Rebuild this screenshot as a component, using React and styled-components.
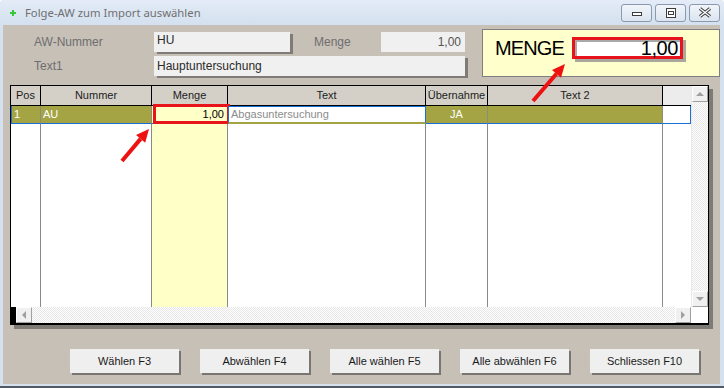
import React from 'react';
import styled, { createGlobalStyle } from 'styled-components';

const Global = createGlobalStyle`
  html, body { margin: 0; padding: 0; background: #ffffff; }
  body { width: 724px; height: 388px; overflow: hidden; font-family: "Liberation Sans", Arial, sans-serif; }
`;

const Window = styled.div`
  position: relative;
  width: 724px;
  height: 388px;
  box-sizing: border-box;
  display: flex;
  flex-direction: column;
  background: #d6e1ef;
  border-bottom: 2px solid #4f5864;
  border-radius: 4px 4px 0 0;
  overflow: hidden;
`;

const TitleBar = styled.div`
  height: 25px;
  flex: none;
  display: flex;
  align-items: center;
  padding: 0 4px 0 10px;
  background: linear-gradient(#e3ecf7, #d4e0ef);
`;

const TitleText = styled.span`
  margin-left: 9px;
  font-family: "Noto Sans", "Open Sans", sans-serif;
  font-size: 11.3px;
  color: #707070;
  flex: 1;
`;

const CapButtons = styled.div`
  display: flex;
  gap: 3px;
`;

const CapBtn = styled.div`
  width: 31px;
  height: 18px;
  box-sizing: border-box;
  border: 1px solid #8a99ae;
  border-radius: 3px;
  background: linear-gradient(#f1f5fa, #dbe4ef);
  display: flex;
  align-items: center;
  justify-content: center;
`;

const Client = styled.div`
  margin: 0 4px 0 3px;
  height: 359px;
  flex: none;
  background: #c7c0b7;
  display: flex;
  flex-direction: column;
`;

const TopSection = styled.div`
  height: 60px;
  flex: none;
  display: flex;
  justify-content: space-between;
  align-items: flex-start;
`;

const Form = styled.div`
  margin: 7px 0 0 31px;
  display: grid;
  grid-template-columns: 120px 136px 24px 67px 84px;
  grid-auto-rows: 20px;
  row-gap: 4px;
`;

const Label = styled.div`
  grid-column: ${p => p.$col};
  font-size: 12px;
  line-height: 20px;
  color: #6e6e6e;
`;

const Field = styled.div`
  grid-column: ${p => p.$col};
  box-sizing: border-box;
  height: 20px;
  padding: 0 4px 0 3px;
  background: #f0f0f0;
  font-size: 12px;
  line-height: ${p => (p.$top ? '16px' : '20px')};
  color: ${p => p.$color || '#2b2b2b'};
  text-align: ${p => p.$align || 'left'};
  box-shadow: ${p => (p.$shadow ? '3px 2px 0 #7f7c78' : 'none')};
`;

const MengeBox = styled.div`
  margin-top: 4px;
  width: 238px;
  height: 48px;
  box-sizing: border-box;
  border: 1px solid #7f7f7f;
  background: #ffffcc;
  display: flex;
  align-items: flex-start;
  padding: 7px 0 0 12px;
`;

const BigLabel = styled.div`
  width: 77px;
  font-size: 20px;
  letter-spacing: -0.9px;
  line-height: 22px;
  color: #000;
`;

const BigInput = styled.div`
  width: 111px;
  height: 22px;
  box-sizing: border-box;
  border: 3px solid #e8141c;
  background: #ffffff;
  box-shadow: inset 2px 2px 0 #a9a9a9, 3px 3px 0 #aaa79f;
  font-size: 20px;
  letter-spacing: -0.4px;
  line-height: 16px;
  text-align: right;
  padding-right: 2px;
  color: #000;
`;

const TableFrame = styled.div`
  margin-left: 7px;
  width: 699px;
  height: 240px;
  flex: none;
  box-sizing: border-box;
  border: 1px solid #000;
  border-bottom-width: 2px;
  box-shadow: 4px 4px 0 #7e7a75;
  background: #ffffff;
  display: grid;
  grid-template-columns: 680px 17px;
  grid-template-rows: 221px 16px;
`;

const GridArea = styled.div`
  display: flex;
  flex-direction: column;
  overflow: hidden;
`;

const COLS = '30px 111px 76px 198px 62px 175px 28px';

const HeaderRow = styled.div`
  display: grid;
  grid-template-columns: ${COLS};
  height: 20px;
  flex: none;
`;

const HeadCell = styled.div`
  box-sizing: border-box;
  height: 20px;
  background: ${p => (p.$blank ? '#ececec' : '#d4d0c8')};
  border-right: ${p => (p.$blank ? 'none' : '1px solid #000')};
  border-bottom: 1px solid #000;
  font-size: 11px;
  line-height: 19px;
  text-align: center;
  color: #1c1c1c;
  white-space: nowrap;
  overflow: hidden;
`;

const SelRow = styled.div`
  display: grid;
  grid-template-columns: ${COLS};
  height: 18px;
  flex: none;
`;

const OLIVE = '#a4a445';
const BLUE = '#1a6fd4';

const Cell = styled.div`
  position: relative;
  box-sizing: border-box;
  height: 18px;
  font-size: 11px;
  line-height: 17px;
  white-space: nowrap;
  background: ${p => p.$bg || OLIVE};
  color: ${p => p.$color || '#ffffff'};
  text-align: ${p => p.$align || 'left'};
  padding: ${p => p.$pad || '0 0 0 2px'};
  border-right: ${p => p.$right || '1px solid #8e8e76'};
  border-bottom: 1px solid ${BLUE};
  border-left: ${p => p.$left || 'none'};
`;

const EditCell = styled(Cell)`
  border: 1px solid ${BLUE};
  border-bottom: 2px solid ${OLIVE};
  line-height: 15px;
`;

const RedMark = styled.div`
  position: absolute;
  left: 1px;
  right: -3px;
  top: -2px;
  bottom: -1px;
  border: 3px solid #e8141c;
  pointer-events: none;
`;

const FillRow = styled.div`
  display: grid;
  grid-template-columns: ${COLS};
  flex: 1;
`;

const FillCell = styled.div`
  background: ${p => (p.$yellow ? '#ffffc8' : '#ffffff')};
  border-right: ${p => (p.$last ? 'none' : '1px solid #8a8a8a')};
`;

const checker = `repeating-conic-gradient(#ffffff 0 25%, #e6e6e6 0 50%) 0 0 / 2px 2px`;

const VScroll = styled.div`
  display: flex;
  flex-direction: column;
  justify-content: space-between;
  background: ${checker};
  border-left: 1px solid #e8e8e8;
`;

const HScroll = styled.div`
  display: flex;
  background: ${checker};
`;

const BlackStub = styled.div`
  width: 5px;
  background: #000;
`;

const ScrollBtn = styled.div`
  width: 16px;
  height: 16px;
  box-sizing: border-box;
  flex: none;
  background: #f0f0f0;
  border: 1px solid;
  border-color: #ffffff #a0a0a0 #a0a0a0 #ffffff;
  display: flex;
  align-items: center;
  justify-content: center;
  margin-left: ${p => (p.$push ? 'auto' : '0')};
`;

const Tri = styled.div`
  width: 0;
  height: 0;
  border: 4px solid transparent;
  ${p => p.$dir === 'up' && `border-bottom-color:#a0a0a0; border-top-width:0;`}
  ${p => p.$dir === 'down' && `border-top-color:#a0a0a0; border-bottom-width:0;`}
  ${p => p.$dir === 'left' && `border-right-color:#a0a0a0; border-left-width:0;`}
  ${p => p.$dir === 'right' && `border-left-color:#a0a0a0; border-right-width:0;`}
`;

const Corner = styled.div`
  background: #ffffff;
`;

const ButtonRow = styled.div`
  display: flex;
  gap: 21px;
  padding-left: 67px;
  margin-top: 24px;
`;

const Button = styled.div`
  width: 109px;
  height: 24px;
  box-sizing: border-box;
  background: #efefef;
  box-shadow: 2px 2px 0 #787572;
  font-size: 11px;
  line-height: 24px;
  text-align: center;
  color: #1a1a1a;
`;

const ArrowSvg = styled.svg`
  position: absolute;
  left: ${p => p.$x}px;
  top: ${p => p.$y}px;
  pointer-events: none;
`;

function Arrow({ x, y, w, h, tail, base, tip, c1, c2 }) {
  return (
    <ArrowSvg $x={x} $y={y} width={w} height={h} viewBox={`0 0 ${w} ${h}`}>
      <line x1={tail[0]} y1={tail[1]} x2={base[0]} y2={base[1]} stroke="#ee1111" strokeWidth="4" />
      <polygon points={`${tip[0]},${tip[1]} ${c1[0]},${c1[1]} ${c2[0]},${c2[1]}`} fill="#ee1111" />
    </ArrowSvg>
  );
}

export default function App() {
  return (
    <>
      <Global />
      <Window>
        <TitleBar>
          <svg width="6" height="6" viewBox="0 0 6 6">
            <rect x="2" y="0" width="2" height="6" fill="#37c837" />
            <rect x="0" y="2" width="6" height="2" fill="#37c837" />
          </svg>
          <TitleText>Folge-AW zum Import auswählen</TitleText>
          <CapButtons>
            <CapBtn>
              <svg width="12" height="10" viewBox="0 0 12 10">
                <rect x="1.5" y="4.5" width="9" height="3" fill="#fff" stroke="#3c3c3c" />
              </svg>
            </CapBtn>
            <CapBtn>
              <svg width="12" height="10" viewBox="0 0 12 10">
                <rect x="1.5" y="0.5" width="9" height="9" fill="#fff" stroke="#3c3c3c" />
                <rect x="3.5" y="3.5" width="5" height="3" fill="#fff" stroke="#3c3c3c" />
              </svg>
            </CapBtn>
            <CapBtn>
              <svg width="14" height="11" viewBox="0 0 14 11">
                <path d="M2 1.5 L12 9.5 M12 1.5 L2 9.5" stroke="#3c3c3c" strokeWidth="3.4" />
                <path d="M2 1.5 L12 9.5 M12 1.5 L2 9.5" stroke="#ffffff" strokeWidth="1.3" />
              </svg>
            </CapBtn>
          </CapButtons>
        </TitleBar>
        <Client>
          <TopSection>
            <Form>
              <Label $col="1">AW-Nummer</Label>
              <Field $col="2" $shadow $top>HU</Field>
              <Label $col="4">Menge</Label>
              <Field $col="5" $align="right" $color="#555555">1,00</Field>
              <Label $col="1">Text1</Label>
              <Field $col="2 / 6" $shadow>Hauptuntersuchung</Field>
            </Form>
            <MengeBox>
              <BigLabel>MENGE</BigLabel>
              <BigInput>1,00</BigInput>
            </MengeBox>
          </TopSection>
          <TableFrame>
            <GridArea>
              <HeaderRow>
                <HeadCell>Pos</HeadCell>
                <HeadCell>Nummer</HeadCell>
                <HeadCell>Menge</HeadCell>
                <HeadCell>Text</HeadCell>
                <HeadCell>Übernahme</HeadCell>
                <HeadCell>Text 2</HeadCell>
                <HeadCell $blank />
              </HeaderRow>
              <SelRow>
                <Cell $left={`1px solid ${BLUE}`}>1</Cell>
                <Cell>AU</Cell>
                <Cell $bg="#ffffc8" $color="#000" $align="right" $pad="0 3px 0 0" $right="1px solid #8a8a8a">
                  1,00
                  <RedMark />
                </Cell>
                <EditCell $bg="#ffffff" $color="#8c8c8c">Abgasuntersuchung</EditCell>
                <Cell $align="center" $pad="0">JA</Cell>
                <Cell />
                <Cell $bg="#ffffff" $right={`1px solid ${BLUE}`} />
              </SelRow>
              <FillRow>
                <FillCell />
                <FillCell />
                <FillCell $yellow />
                <FillCell />
                <FillCell />
                <FillCell />
                <FillCell $last />
              </FillRow>
            </GridArea>
            <VScroll>
              <ScrollBtn><Tri $dir="up" /></ScrollBtn>
              <ScrollBtn><Tri $dir="down" /></ScrollBtn>
            </VScroll>
            <HScroll>
              <BlackStub />
              <ScrollBtn><Tri $dir="left" /></ScrollBtn>
              <ScrollBtn $push><Tri $dir="right" /></ScrollBtn>
            </HScroll>
            <Corner />
          </TableFrame>
          <ButtonRow>
            <Button>Wählen F3</Button>
            <Button>Abwählen F4</Button>
            <Button>Alle wählen F5</Button>
            <Button>Alle abwählen F6</Button>
            <Button>Schliessen F10</Button>
          </ButtonRow>
        </Client>
        <Arrow x={528} y={60} w={42} h={46} tail={[5, 41]} base={[28.5, 13.8]} tip={[37, 4]} c1={[33, 17.7]} c2={[24, 9.9]} />
        <Arrow x={117} y={124} w={38} h={42} tail={[5, 37]} base={[23.6, 14.9]} tip={[32, 5]} c1={[28.2, 18.8]} c2={[19, 11]} />
      </Window>
    </>
  );
}
